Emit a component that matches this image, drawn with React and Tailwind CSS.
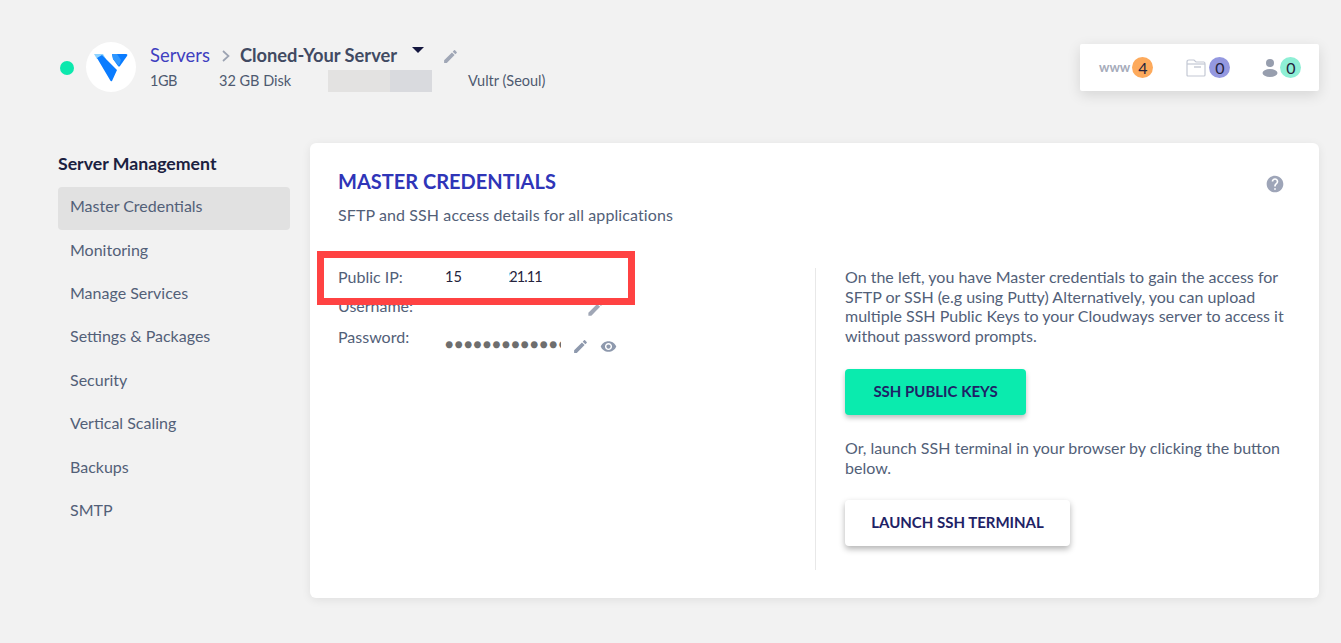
import React from 'react'
import { MdEdit, MdVisibility, MdHelp } from 'react-icons/md'

const menu = [
  'Master Credentials',
  'Monitoring',
  'Manage Services',
  'Settings & Packages',
  'Security',
  'Vertical Scaling',
  'Backups',
  'SMTP',
]

const Logo = () => (
  <svg viewBox="0 0 50 50" className="w-[50px] h-[50px]">
    <path d="M8 12 H17 L20 17 H11 Z" fill="#8fd3ff" />
    <path d="M11 16 L16 13 L31 28 L26 39 Q25 40 24 38 Z" fill="#0a7cff" />
    <path d="M26 12 H40 Q42 12 41 14 L34 24 Q33 25 32 24 L27 17 Z" fill="#0a7cff" />
    <path d="M26 12 H31 L35 18 L33 24 L27 17 Z" fill="#2f97ff" />
  </svg>
)

const FolderIcon = () => (
  <svg viewBox="0 0 20 18" className="w-5 h-[18px]" fill="none" stroke="#c3c8d4" strokeWidth="1.2">
    <path d="M1 16 V3 Q1 1 3 1 H8 L10 3 H18 Q19 3 19 5 V16 Q19 17 18 17 H2 Q1 17 1 16 Z" />
    <path d="M1 5 H19" />
    <rect x="8" y="7" width="7" height="2" fill="#d5d8e0" stroke="none" />
  </svg>
)

const PersonIcon = () => (
  <svg viewBox="0 0 16 20" className="w-4 h-5" fill="#979eae">
    <circle cx="8" cy="5" r="4" />
    <ellipse cx="8" cy="15" rx="7.5" ry="4" />
  </svg>
)

const Count = ({ value, color }) => (
  <span className={`w-[21px] h-[21px] rounded-full flex items-center justify-center text-[16px] text-[#25233c] ${color}`}>
    {value}
  </span>
)

const App = () => {
  return (
    <div className="h-[643px] overflow-hidden bg-[#f2f2f2] font-['Lato',sans-serif] text-[16px] text-[#526078]">
      <header className="flex items-start pt-[42px] pl-[60px] pr-[22px] h-[143px]">
        <span className="w-[14px] h-[14px] mt-[19px] rounded-full bg-[#0ce8ad]" />
        <span className="w-[50px] h-[50px] ml-[12px] rounded-full bg-white">
          <Logo />
        </span>
        <div className="ml-[14px] relative">
          <div className="flex items-center h-[26px] mt-[1px]">
            <a className="text-[18.4px] text-[#3f3fc0]">Servers</a>
            <svg viewBox="0 0 10 12" className="w-[10px] h-3 ml-[11px] mr-[9px]" fill="none" stroke="#9ca3b2" strokeWidth="1.7">
              <path d="M2 1 L7.5 6 L2 11" />
            </svg>
            <span className="text-[18.3px] font-bold text-[#414a62]">Cloned-Your Server</span>
            <span className="ml-[15px] mb-[12px] w-0 h-0 border-x-[6px] border-x-transparent border-t-[6px] border-t-[#14173f]" />
            <MdEdit className="ml-[18px] text-[17px] text-[#a0a7b6]" />
          </div>
          <div className="flex items-center h-[22px] mt-[1px] text-[14.5px] text-[#4e5a70]">
            <span className="w-[69px] tracking-[-0.5px]">1GB</span>
            <span className="w-[109px]">32 GB Disk</span>
            <span className="w-[62px] h-[22px] bg-[#e3e2e1]" />
            <span className="w-[42px] h-[22px] bg-[#d9dade]" />
            <span className="ml-[36px]">Vultr (Seoul)</span>
          </div>
        </div>
        <div className="ml-auto mt-[2px] w-[239px] h-[47px] bg-white rounded-[2px] shadow-[0_4px_14px_rgba(0,0,0,0.12)] flex items-center pl-[19px]">
          <span className="text-[13px] font-bold text-[#a6abba] mr-[2px]">www</span>
          <Count value="4" color="bg-[#fdaa5c]" />
          <span className="ml-[33px] mr-[3px]"><FolderIcon /></span>
          <Count value="0" color="bg-[#9498e0]" />
          <span className="ml-[32px] mr-[2px]"><PersonIcon /></span>
          <Count value="0" color="bg-[#8eefd5]" />
        </div>
      </header>

      <div className="flex pl-[58px] pr-[22px]">
        <aside className="w-[232px] mr-[20px]">
          <h2 className="mt-[10px] h-[21px] leading-[21px] text-[17.7px] font-bold text-[#1b2140]">Server Management</h2>
          <ul className="mt-[13px]">
            {menu.map((item, i) => (
              <li
                key={item}
                className={`h-[43.4px] flex items-center pl-[12px] pb-[5px] rounded ${i === 0 ? 'bg-[#e1e1e1]' : ''}`}
              >
                {item}
              </li>
            ))}
          </ul>
        </aside>

        <main className="relative flex-1 h-[455px] bg-white rounded-md shadow-[0_2px_10px_rgba(0,0,0,0.08)] px-[28px]">
          <MdHelp className="absolute top-[31px] right-[34px] text-[20px] text-[#9ea5b8]" />
          <h1 className="pt-[26px] h-[52px] text-[20px] leading-[24px] font-bold text-[#2f35b8]">MASTER CREDENTIALS</h1>
          <p className="mt-[10px] h-[20px] leading-[20px] tracking-[0.1px]">SFTP and SSH access details for all applications</p>

          <div className="flex mt-[43px]">
            <div className="w-[478px] border-r border-[#e8e8e8] h-[302px]">
              <div className="h-[20px]" />
              <div className="flex h-[30px] pt-[8px] leading-[20px]">
                <span className="w-[248px]">Username:</span>
                <MdEdit className="mt-[3px] text-[19px] text-[#a0a7b6]" />
              </div>
              <div className="flex h-[36px] pt-[9px] leading-[20px]">
                <span className="w-[107px]">Password:</span>
                <span className="w-[116px] h-[20px] mt-[7px] overflow-hidden whitespace-nowrap text-[14px] tracking-[1.05px] text-[#6e6e6e]">●●●●●●●●●●●●●</span>
                <MdEdit className="ml-[11px] mt-[11px] text-[17px] text-[#8e99ad]" />
                <MdVisibility className="ml-[11px] mt-[11px] text-[17px] text-[#8e99ad]" />
              </div>
            </div>

            <div className="flex-1 pl-[29px] -mr-[2px] -mt-[1px]">
              <p className="leading-[19.5px]">
                On the left, you have Master credentials to gain the access for SFTP or SSH (e.g using Putty) Alternatively, you can upload multiple SSH Public Keys to your Cloudways server to access it without password prompts.
              </p>
              <button className="block mt-[24px] w-[181px] h-[46px] pb-[2px] rounded bg-[#0aebae] text-[15px] font-bold text-[#1e2266] shadow-[0_3px_5px_rgba(0,0,0,0.25)]">
                SSH PUBLIC KEYS
              </button>
              <p className="mt-[23px] leading-[19.5px]">
                Or, launch SSH terminal in your browser by clicking the button below.
              </p>
              <button className="block mt-[23px] w-[225px] h-[46px] pb-[2px] rounded bg-white text-[15px] font-bold text-[#1e2266] shadow-[0_3px_6px_rgba(0,0,0,0.3)]">
                LAUNCH SSH TERMINAL
              </button>
            </div>
          </div>

          {/* red annotation over the ip row */}
          <div className="absolute left-[7px] top-[108px] w-[318px] h-[54px] pb-[2px] border-[7px] border-[#ff4242] bg-white flex items-center">
            <span className="ml-[14px] w-[107px]">Public IP:</span>
            <span className="text-[14.5px] text-[#25233c]">15</span>
            <span className="ml-[47px] w-[33px] flex justify-end overflow-hidden whitespace-nowrap text-[14.5px] tracking-[-0.9px] text-[#25233c]">221.11</span>
          </div>
        </main>
      </div>
    </div>
  )
}

export default App
